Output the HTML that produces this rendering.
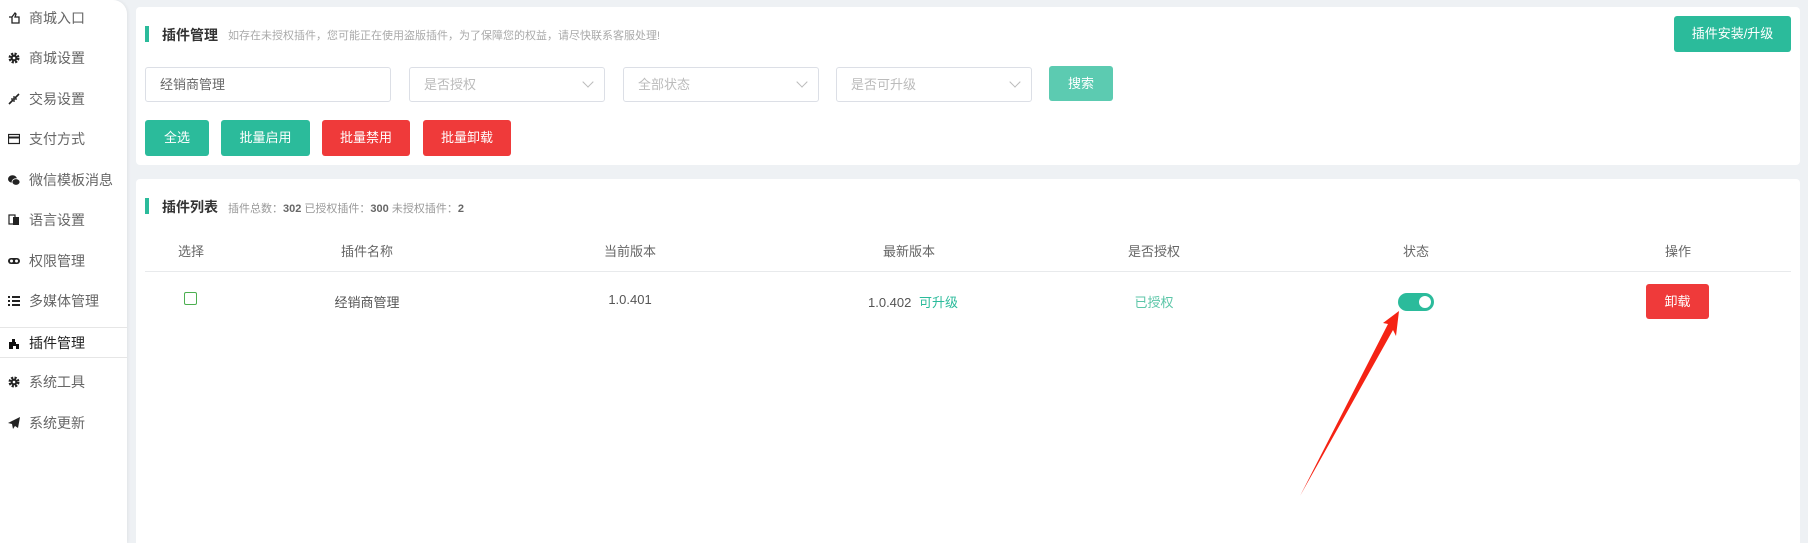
<!DOCTYPE html>
<html><head><meta charset="utf-8"><style>
*{margin:0;padding:0;box-sizing:border-box}
html,body{width:1808px;height:543px;overflow:hidden}
body{background:#eef1f4;font-family:"Liberation Sans","Noto Sans CJK SC",sans-serif;position:relative;color:#333}
.side{position:absolute;left:0;top:0;width:127px;height:543px;background:#fff;border-top-right-radius:14px;box-shadow:1px 0 3px rgba(0,0,0,.06)}
.mi{position:absolute;left:0;width:127px;height:30px;line-height:30px;font-size:14px;color:#666}
.mi .ic{position:absolute;left:8px;top:9px;width:12px;height:12px}
.mi span{position:absolute;left:29px}
.mi.act{border-top:1px solid #e6e6e6;border-bottom:1px solid #e6e6e6;color:#222}
.card{position:absolute;background:#fff;border-radius:4px}
.abs{position:absolute}
.bar{position:absolute;width:4px;height:16px;background:#2bbb9b}
.btn{position:absolute;color:#fff;font-size:13px;text-align:center;border-radius:3px}
.g{background:#2bbb9b}.r{background:#ef3a3a}
.sel{position:absolute;top:67px;height:35px;border:1px solid #dcdfe6;border-radius:3px;font-size:13px;color:#bbb;line-height:33px;padding-left:14px}
.sel i{position:absolute;right:12px;top:10px;width:8px;height:8px;border-right:1px solid #bbb;border-bottom:1px solid #bbb;transform:rotate(45deg)}
.th{position:absolute;top:241px;font-size:13px;color:#666;transform:translateX(-50%)}
.td{position:absolute;top:292px;font-size:13px;color:#555;transform:translateX(-50%)}
</style></head><body>
<div class="side">
<div class="mi" style="top:3px"><svg class="ic" viewBox="0 0 12 12"><path d="M1 5h3l3-4 1 1-1 3h4v6H4V5" fill="none" stroke="#222" stroke-width="1.3"/></svg><span>商城入口</span></div>
<div class="mi" style="top:43px"><svg class="ic" viewBox="0 0 12 12"><circle cx="6" cy="6" r="4" fill="none" stroke="#222" stroke-width="3" stroke-dasharray="2 1.2"/><circle cx="6" cy="6" r="3.3" fill="#222"/><circle cx="6" cy="6" r="1.3" fill="#fff"/></svg><span>商城设置</span></div>
<div class="mi" style="top:84px"><svg class="ic" viewBox="0 0 12 12"><path d="M1 11l4-4M11 1L7 5" stroke="#222" stroke-width="1.6"/><path d="M3 6h3v3M9 6H6V3" fill="none" stroke="#222" stroke-width="1.3"/></svg><span>交易设置</span></div>
<div class="mi" style="top:124px"><svg class="ic" viewBox="0 0 12 12"><rect x=".5" y="1.5" width="11" height="9" fill="none" stroke="#222" stroke-width="1.2"/><rect x="1" y="3.5" width="10" height="2" fill="#222"/></svg><span>支付方式</span></div>
<div class="mi" style="top:165px"><svg class="ic" viewBox="0 0 12 12"><ellipse cx="4.5" cy="5" rx="4.5" ry="3.8" fill="#222"/><ellipse cx="8" cy="8" rx="4" ry="3.3" fill="#222" stroke="#fff" stroke-width=".8"/></svg><span>微信模板消息</span></div>
<div class="mi" style="top:205px"><svg class="ic" viewBox="0 0 12 12"><rect x="1" y="1" width="6" height="9" fill="none" stroke="#222" stroke-width="1.2"/><rect x="5" y="3" width="6" height="8" fill="#222"/></svg><span>语言设置</span></div>
<div class="mi" style="top:246px"><svg class="ic" viewBox="0 0 12 12"><rect x="0" y="3" width="12" height="6" rx="3" fill="#222"/><circle cx="3.5" cy="6" r="1.5" fill="#fff"/><circle cx="8.5" cy="6" r="1.5" fill="#fff"/></svg><span>权限管理</span></div>
<div class="mi" style="top:286px"><svg class="ic" viewBox="0 0 12 12"><path d="M0 2h2M0 6h2M0 10h2M4 2h8M4 6h8M4 10h8" stroke="#222" stroke-width="2"/></svg><span>多媒体管理</span></div>
<div class="mi act" style="top:327px;height:31px"><svg class="ic" viewBox="0 0 12 12"><path d="M1 12V5h3V2h3v3h1v2h3v5H8V9H5v3z" fill="#111"/></svg><span>插件管理</span></div>
<div class="mi" style="top:367px"><svg class="ic" viewBox="0 0 12 12"><circle cx="6" cy="6" r="4" fill="none" stroke="#222" stroke-width="3" stroke-dasharray="2 1.2"/><circle cx="6" cy="6" r="3.3" fill="#222"/><circle cx="6" cy="6" r="1.3" fill="#fff"/></svg><span>系统工具</span></div>
<div class="mi" style="top:408px"><svg class="ic" viewBox="0 0 12 12"><path d="M12 0L0 6l4 1 1 5 2-3 3 2z" fill="#222"/></svg><span>系统更新</span></div>
</div>

<div class="card" style="left:136px;top:7px;width:1664px;height:158px"></div>
<div class="bar" style="left:145px;top:26px"></div>
<div class="abs" style="left:162px;top:25px;font-size:14px;font-weight:bold;color:#333">插件管理</div>
<div class="abs" style="left:228px;top:27px;font-size:11px;color:#aaa">如存在未授权插件，您可能正在使用盗版插件，为了保障您的权益，请尽快联系客服处理!</div>
<div class="btn g" style="left:1674px;top:16px;width:117px;height:36px;line-height:36px">插件安装/升级</div>
<div class="sel" style="left:145px;width:246px;color:#666">经销商管理</div>
<div class="sel" style="left:409px;width:196px">是否授权<i></i></div>
<div class="sel" style="left:623px;width:196px">全部状态<i></i></div>
<div class="sel" style="left:836px;width:196px">是否可升级<i></i></div>
<div class="btn" style="left:1049px;top:66px;width:64px;height:35px;line-height:35px;background:#5ccbb1">搜索</div>
<div class="btn g" style="left:145px;top:120px;width:64px;height:36px;line-height:36px">全选</div>
<div class="btn g" style="left:221px;top:120px;width:89px;height:36px;line-height:36px">批量启用</div>
<div class="btn r" style="left:322px;top:120px;width:88px;height:36px;line-height:36px">批量禁用</div>
<div class="btn r" style="left:423px;top:120px;width:88px;height:36px;line-height:36px">批量卸载</div>

<div class="card" style="left:136px;top:179px;width:1664px;height:364px;border-radius:4px 4px 0 0"></div>
<div class="bar" style="left:145px;top:198px"></div>
<div class="abs" style="left:162px;top:197px;font-size:14px;font-weight:bold;color:#333">插件列表</div>
<div class="abs" style="left:228px;top:200px;font-size:11px;color:#999">插件总数：<b style="color:#666">302</b> 已授权插件：<b style="color:#666">300</b> 未授权插件：<b style="color:#666">2</b></div>
<div class="th" style="left:191px">选择</div>
<div class="th" style="left:367px">插件名称</div>
<div class="th" style="left:630px">当前版本</div>
<div class="th" style="left:909px">最新版本</div>
<div class="th" style="left:1154px">是否授权</div>
<div class="th" style="left:1416px">状态</div>
<div class="th" style="left:1678px">操作</div>
<div class="abs" style="left:145px;top:271px;width:1646px;height:1px;background:#e8eaec"></div>
<div class="abs" style="left:184px;top:292px;width:13px;height:13px;border:1px solid #4caf50;border-radius:2px"></div>
<div class="td" style="left:367px">经销商管理</div>
<div class="td" style="left:630px">1.0.401</div>
<div class="td" style="left:913px">1.0.402 <span style="color:#2bbb9b;margin-left:4px">可升级</span></div>
<div class="td" style="left:1154px;color:#5cc6a8">已授权</div>
<div class="abs" style="left:1398px;top:293px;width:36px;height:18px;border-radius:9px;background:#2bbb9b"><div style="position:absolute;right:3px;top:3px;width:12px;height:12px;border-radius:50%;background:#fff"></div></div>
<div class="btn r" style="left:1646px;top:284px;width:63px;height:35px;line-height:35px">卸载</div>
<svg class="abs" style="left:0;top:0" width="1808" height="543"><path d="M1399 311L1383 323 1388 324 1300 496 1393 330 1396 336z" fill="#f52314"/></svg>
</body></html>
